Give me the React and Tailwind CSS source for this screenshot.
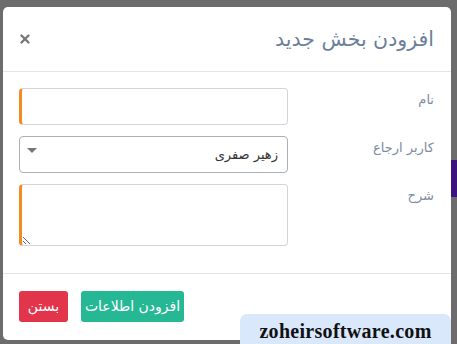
import { X } from "lucide-react";

function Field({ label, children }) {
  return (
    <div className="flex items-start justify-between">
      <label className="pt-[2px] text-[13px] text-[#7b8ba3]">{label}</label>
      {children}
    </div>
  );
}

export default function App() {
  return (
    <div
      className="relative h-[344px] w-[457px] overflow-hidden bg-[#6c6c6c] pt-[7px] pl-[3px]"
      style={{ fontFamily: '"DejaVu Sans", sans-serif' }}
    >
      {/* page behind the overlay */}
      <div className="absolute right-0 top-[160px] h-[37px] w-[6px] bg-[#3a1580]" />

      <div dir="rtl" className="flex h-[333px] w-[448px] flex-col rounded-[5px] bg-white">
        <div className="flex h-[65px] items-center justify-between border-b border-[#e5e5e5] pr-[17px] pl-[15px]">
          <h4 className="text-[20.5px] font-normal text-[#6c7f9a]">افزودن بخش جدید</h4>
          <X className="h-[14px] w-[14px] text-[#777]" strokeWidth={4} />
        </div>

        <div className="flex flex-1 flex-col gap-[11px] pr-[17px] pl-[16px] pt-[16px]">
          <Field label="نام">
            <div className="h-[37px] w-[269px] rounded-[4px] border border-l-[3px] border-[#d2d6dc] border-l-[#f68a22]" />
          </Field>
          <Field label="کاربر ارجاع">
            <div className="flex h-[37px] w-[269px] items-center justify-between rounded-[4px] border border-[#aab0b6] pr-[9px] pl-[7px]">
              <span className="text-[13px] text-[#333]">زهیر صفری</span>
              <span className="mb-[8px] h-0 w-0 border-x-[5px] border-t-[5px] border-x-transparent border-t-[#777]" />
            </div>
          </Field>
          <Field label="شرح">
            <textarea
              dir="rtl"
              className="h-[62px] w-[269px] rounded-[4px] border border-l-[3px] border-[#d2d6dc] border-l-[#f68a22] outline-none"
            />
          </Field>
        </div>

        <div className="flex h-[67px] items-center justify-end gap-[13px] border-t border-[#e5e5e5] pl-[16px] pb-[2px]">
          <button className="h-[31px] w-[103px] rounded-[3px] bg-[#26b894] text-[14px] text-white">
            افزودن اطلاعات
          </button>
          <button className="h-[31px] w-[49px] rounded-[3px] bg-[#e2344b] text-[14px] text-white">
            بستن
          </button>
        </div>
      </div>

      <div
        className="absolute left-[240px] top-[314px] flex h-[36px] w-[211px] items-start justify-center rounded-[7px] bg-[#dae8fc] pt-[2px] text-[20px] font-bold tracking-[0.3px] text-[#111]"
        style={{ fontFamily: '"Liberation Serif", serif' }}
      >
        zoheirsoftware.com
      </div>
    </div>
  );
}
